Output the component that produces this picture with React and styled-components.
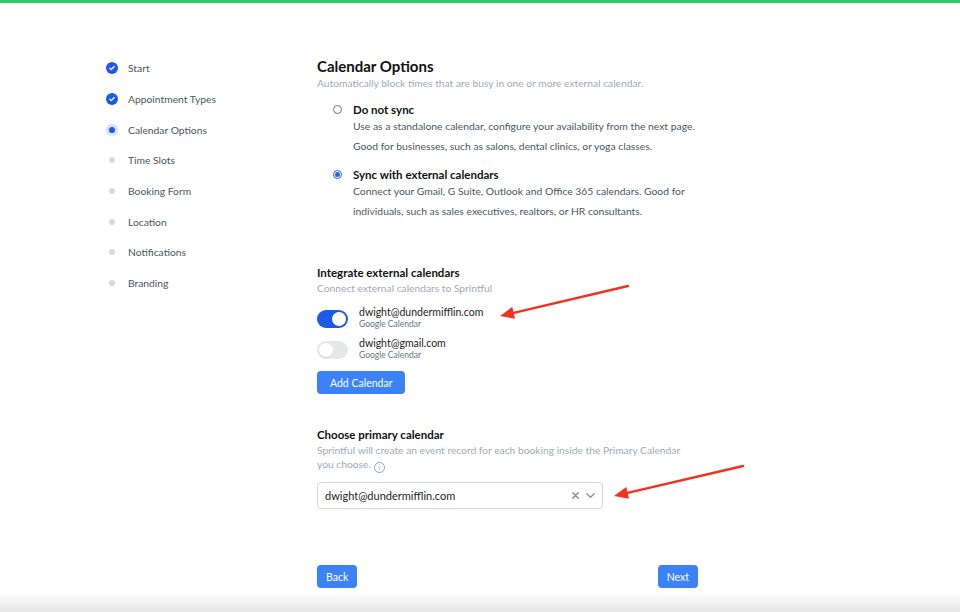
import React from "react";
import styled, { createGlobalStyle } from "styled-components";

const GlobalStyle = createGlobalStyle`
  html, body {
    margin: 0;
    padding: 0;
    background: #fff;
  }
  body {
    font-family: 'Lato', 'Noto Sans', sans-serif;
    color: #111827;
  }
`;

const Page = styled.div`
  position: relative;
  width: 960px;
  height: 612px;
  overflow: hidden;
  border-top: 3px solid #2ec866;
  box-sizing: border-box;
  display: flex;
  padding: 53px 0 0 106px;

  &::after {
    content: "";
    position: absolute;
    left: 0;
    right: 0;
    bottom: 0;
    height: 20px;
    background: linear-gradient(to bottom, rgba(232,232,232,0), #e6e6e6);
  }
`;

// 왼쪽 단계 목록
const Steps = styled.ul`
  list-style: none;
  margin: 3px 0 0;
  padding: 0;
  width: 211px;
  display: flex;
  flex-direction: column;
  gap: 12px;
`;

const Step = styled.li`
  display: flex;
  align-items: center;
  gap: 10px;
  height: 18.7px;
  font-size: 10.3px;
  color: #4b5563;
`;

const StepIcon = styled.span`
  width: 12px;
  height: 12px;
  border-radius: 50%;
  display: flex;
  align-items: center;
  justify-content: center;
  flex-shrink: 0;
  background: ${(p) =>
    p.$state === "done" ? "#1d5ae8" : p.$state === "current" ? "#d3e3fd" : "transparent"};

  &::after {
    content: "";
    display: ${(p) => (p.$state === "done" ? "none" : "block")};
    width: 6px;
    height: 6px;
    border-radius: 50%;
    background: ${(p) => (p.$state === "current" ? "#1d5ae8" : "#d6d9df")};
  }
`;

const Main = styled.div`
  width: 381px;
  display: flex;
  flex-direction: column;
`;

const Title = styled.h1`
  margin: 0;
  font-size: 15px;
  font-weight: 700;
  line-height: 20px;
  color: #111;
`;

const SectionTitle = styled.h2`
  margin: 0;
  font-size: 11.5px;
  font-weight: 700;
  line-height: 16px;
  color: #111;
`;

const Muted = styled.p`
  margin: 0;
  font-size: 10.25px;
  line-height: 14px;
  color: #a3a8b6;
`;

const Options = styled.div`
  display: flex;
  flex-direction: column;
  gap: 11px;
  margin: 12px 0 0 16px;
`;

const Option = styled.label`
  display: flex;
  gap: 11px;
`;

const Radio = styled.span`
  width: 9px;
  height: 9px;
  margin-top: 3px;
  border-radius: 50%;
  flex-shrink: 0;
  box-sizing: border-box;
  border: 1px solid ${(p) => (p.$checked ? "#2563eb" : "#6b7280")};
  background: #fff;
  display: flex;
  align-items: center;
  justify-content: center;

  &::after {
    content: "";
    display: ${(p) => (p.$checked ? "block" : "none")};
    width: 5px;
    height: 5px;
    border-radius: 50%;
    background: #2563eb;
  }
`;

const OptionLabel = styled.div`
  font-size: 11.5px;
  font-weight: 700;
  line-height: 15px;
  color: #111;
`;

const OptionText = styled.div`
  font-size: 10.35px;
  line-height: 19.5px;
  color: #4b5563;
`;

const Section = styled.section`
  margin-top: ${(p) => p.$top || 0}px;
  display: flex;
  flex-direction: column;
`;

const Accounts = styled.div`
  display: flex;
  flex-direction: column;
  gap: 10px;
  margin-top: 13px;
`;

const Account = styled.div`
  display: flex;
  align-items: center;
  gap: 11px;
`;

const Toggle = styled.span`
  width: 31px;
  height: 18px;
  border-radius: 9px;
  box-sizing: border-box;
  padding: 2px;
  background: ${(p) => (p.$on ? "#1d5ae8" : "#e5e7eb")};
  display: flex;
  justify-content: ${(p) => (p.$on ? "flex-end" : "flex-start")};
  flex-shrink: 0;

  &::after {
    content: "";
    width: 14px;
    height: 14px;
    border-radius: 50%;
    background: #fff;
    box-shadow: 0 1px 1px rgba(0,0,0,0.08);
  }
`;

const AccountText = styled.div`
  display: flex;
  flex-direction: column;
  margin-top: -2px;
`;

const Email = styled.span`
  font-size: 10.5px;
  line-height: 13px;
  color: #222;
`;

const Provider = styled.span`
  font-size: 8.5px;
  line-height: 10px;
  color: #6b7280;
`;

const Button = styled.button`
  height: 23px;
  padding: 0 ${(p) => p.$pad || 13}px;
  border: none;
  border-radius: 4px;
  background: #3b82f6;
  color: #fff;
  font-family: inherit;
  font-size: 10.5px;
  cursor: pointer;
  align-self: flex-start;
  margin-top: ${(p) => p.$top || 0}px;
`;

const InfoIcon = styled.span`
  display: inline-flex;
  align-items: center;
  justify-content: center;
  width: 9px;
  height: 9px;
  border: 1px solid #9ca3af;
  border-radius: 50%;
  font-size: 7px;
  line-height: 1;
  color: #9ca3af;
  vertical-align: -2px;
  margin-left: 3px;
`;

const Select = styled.div`
  margin-top: 9px;
  width: 286px;
  height: 27px;
  box-sizing: border-box;
  border: 1px solid #d4d7dd;
  border-radius: 4px;
  display: flex;
  align-items: center;
  padding: 0 6px 0 7px;
  font-size: 11px;
  color: #222;
  box-shadow: 0 1px 2px rgba(0,0,0,0.04);
`;

const SelectValue = styled.span`
  flex: 1;
`;

const SelectIcons = styled.span`
  display: flex;
  align-items: center;
  gap: 5px;
  color: #8d929c;
`;

const Footer = styled.div`
  margin-top: 56px;
  display: flex;
  justify-content: space-between;
`;

const Arrows = styled.svg`
  position: absolute;
  left: 0;
  top: 0;
  pointer-events: none;
`;

const steps = [
  { name: "Start", state: "done" },
  { name: "Appointment Types", state: "done" },
  { name: "Calendar Options", state: "current" },
  { name: "Time Slots" },
  { name: "Booking Form" },
  { name: "Location" },
  { name: "Notifications" },
  { name: "Branding" },
];

const Check = () => (
  <svg width="8" height="8" viewBox="0 0 10 10">
    <path d="M2.3 5.2l1.8 1.8 3.6-3.8" fill="none" stroke="#fff" strokeWidth="1.6" strokeLinecap="round" strokeLinejoin="round" />
  </svg>
);

const Arrow = ({ x1, y1, x2, y2 }) => {
  const a = Math.atan2(y2 - y1, x2 - x1);
  const len = 14;
  const w = 6;
  const bx = x2 - len * Math.cos(a);
  const by = y2 - len * Math.sin(a);
  const px = -Math.sin(a) * w;
  const py = Math.cos(a) * w;
  return (
    <g>
      <line x1={x1} y1={y1} x2={bx} y2={by} stroke="#f5301e" strokeWidth="2.4" strokeLinecap="round" />
      <polygon points={`${x2},${y2} ${bx + px},${by + py} ${bx - px},${by - py}`} fill="#f5301e" />
    </g>
  );
};

export default function App() {
  return (
    <>
      <GlobalStyle />
      <Page>
        <Steps>
          {steps.map((s) => (
            <Step key={s.name}>
              <StepIcon $state={s.state}>{s.state === "done" && <Check />}</StepIcon>
              {s.name}
            </Step>
          ))}
        </Steps>

        <Main>
          <Title>Calendar Options</Title>
          <Muted>Automatically block times that are busy in one or more external calendar.</Muted>

          <Options>
            <Option>
              <Radio />
              <div>
                <OptionLabel>Do not sync</OptionLabel>
                <OptionText>
                  Use as a standalone calendar, configure your availability from the next page.
                  <br />
                  Good for businesses, such as salons, dental clinics, or yoga classes.
                </OptionText>
              </div>
            </Option>
            <Option>
              <Radio $checked />
              <div>
                <OptionLabel>Sync with external calendars</OptionLabel>
                <OptionText>
                  Connect your Gmail, G Suite, Outlook and Office 365 calendars. Good for
                  <br />
                  individuals, such as sales executives, realtors, or HR consultants.
                </OptionText>
              </div>
            </Option>
          </Options>

          <Section $top={44}>
            <SectionTitle>Integrate external calendars</SectionTitle>
            <Muted>Connect external calendars to Sprintful</Muted>
            <Accounts>
              <Account>
                <Toggle $on />
                <AccountText>
                  <Email>dwight@dundermifflin.com</Email>
                  <Provider>Google Calendar</Provider>
                </AccountText>
              </Account>
              <Account>
                <Toggle />
                <AccountText>
                  <Email>dwight@gmail.com</Email>
                  <Provider>Google Calendar</Provider>
                </AccountText>
              </Account>
            </Accounts>
            <Button $top={11}>Add Calendar</Button>
          </Section>

          <Section $top={33}>
            <SectionTitle>Choose primary calendar</SectionTitle>
            <Muted>
              Sprintful will create an event record for each booking inside the Primary Calendar
              <br />
              you choose.
              <InfoIcon>i</InfoIcon>
            </Muted>
            <Select>
              <SelectValue>dwight@dundermifflin.com</SelectValue>
              <SelectIcons>
                <svg width="9" height="9" viewBox="0 0 10 10">
                  <path d="M2 2l6 6M8 2l-6 6" stroke="currentColor" strokeWidth="1.8" strokeLinecap="round" />
                </svg>
                <svg width="11" height="11" viewBox="0 0 12 12">
                  <path d="M2 4l4 4 4-4" fill="none" stroke="currentColor" strokeWidth="1.5" strokeLinecap="round" strokeLinejoin="round" />
                </svg>
              </SelectIcons>
            </Select>
          </Section>

          <Footer>
            <Button $pad={9}>Back</Button>
            <Button $pad={9}>Next</Button>
          </Footer>
        </Main>

        <Arrows width="960" height="612">
          <Arrow x1={628} y1={283} x2={500} y2={313} />
          <Arrow x1={743} y1={463} x2={614} y2={493} />
        </Arrows>
      </Page>
    </>
  );
}
